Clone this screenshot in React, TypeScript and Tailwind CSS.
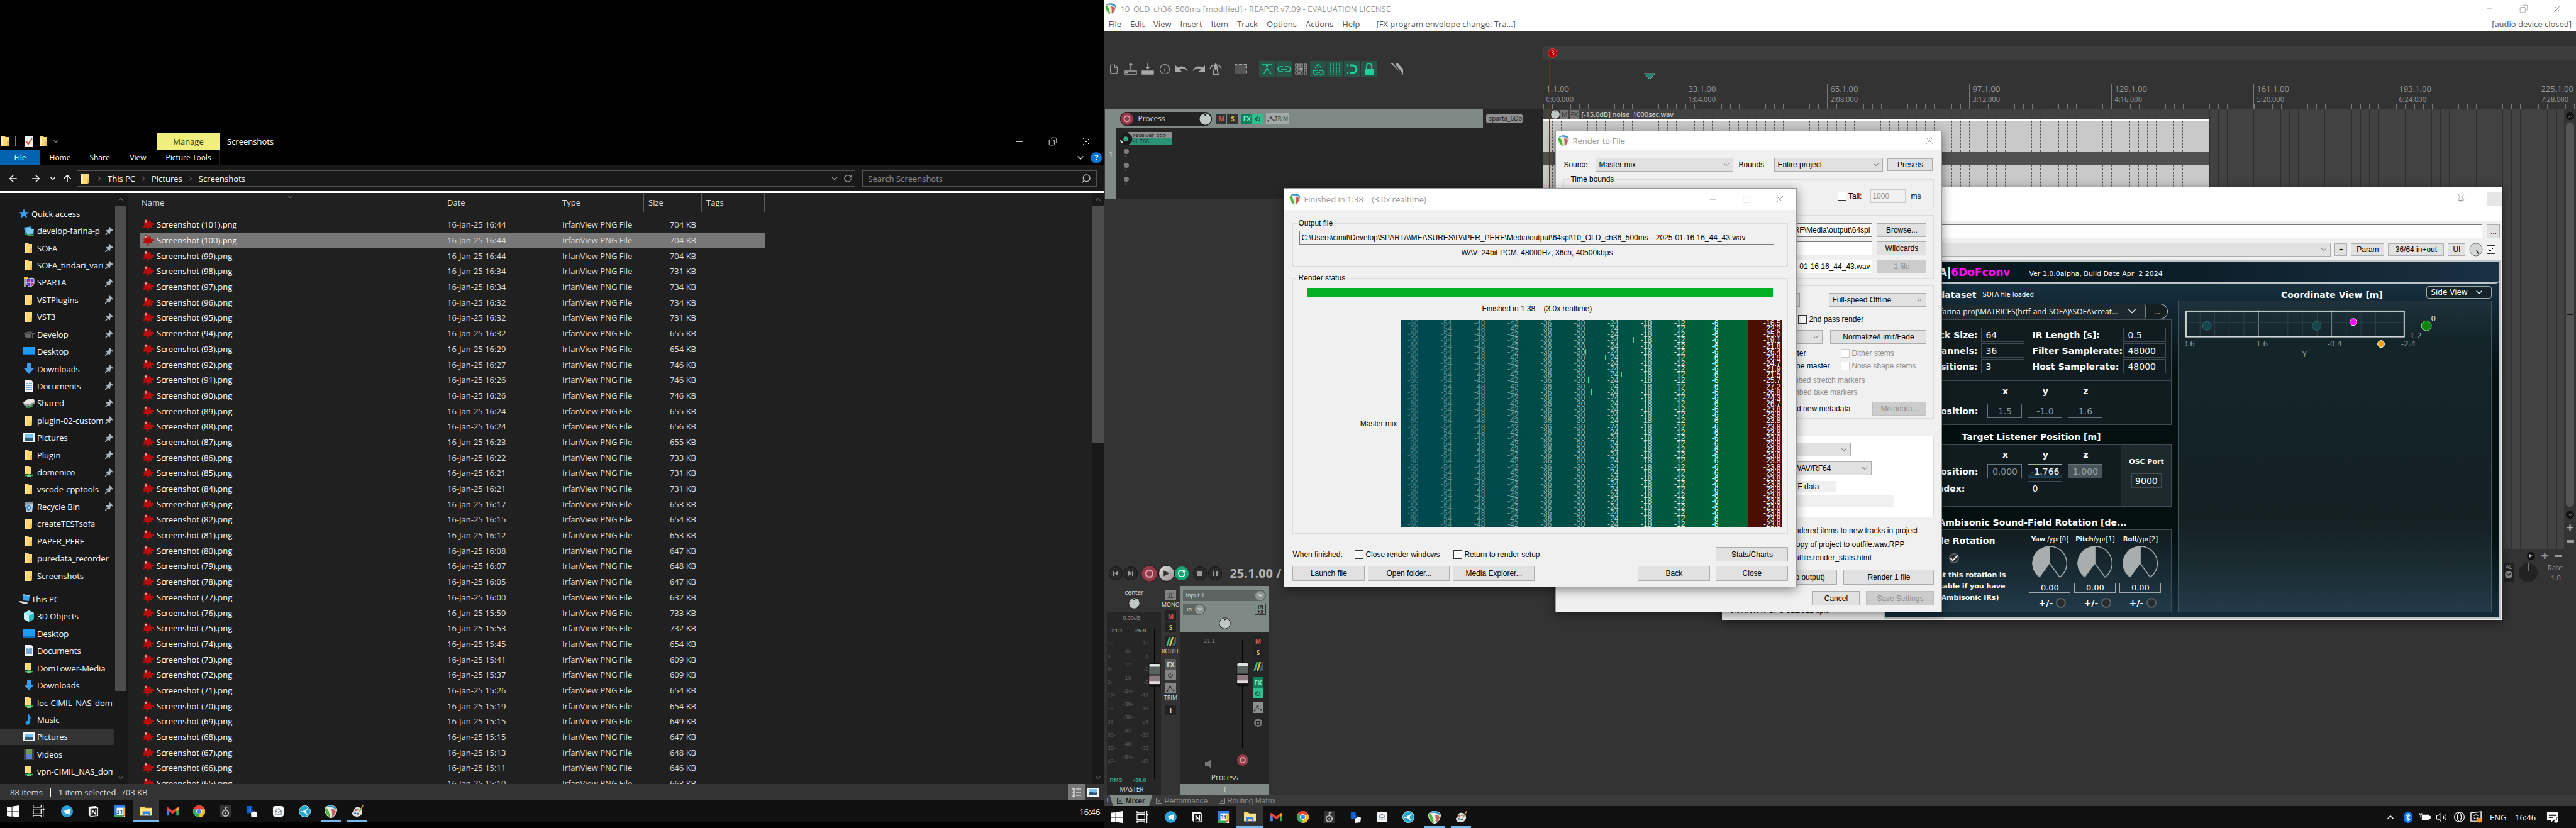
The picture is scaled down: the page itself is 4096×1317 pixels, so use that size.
import React from "react";
import {
  ArrowLeft, ArrowRight, ArrowUp, ChevronDown, ChevronRight, ChevronUp, Copy, Minus, RotateCw, Search, X, Square,
  Info, File, Bluetooth, Volume2, Globe, Check, Pin,
} from "lucide-react";

/* ---------- data ---------- */

const FILES: [number, string, number][] = [
  [101, "16:44", 704], [100, "16:44", 704], [99, "16:44", 704], [98, "16:34", 731], [97, "16:34", 734],
  [96, "16:32", 734], [95, "16:32", 731], [94, "16:32", 655], [93, "16:29", 654], [92, "16:27", 746],
  [91, "16:26", 746], [90, "16:26", 746], [89, "16:24", 655], [88, "16:24", 656], [87, "16:23", 655],
  [86, "16:22", 733], [85, "16:21", 731], [84, "16:21", 731], [83, "16:17", 653], [82, "16:15", 654],
  [81, "16:12", 653], [80, "16:08", 647], [79, "16:07", 648], [78, "16:05", 647], [77, "16:00", 632],
  [76, "15:59", 733], [75, "15:53", 732], [74, "15:45", 654], [73, "15:41", 609], [72, "15:37", 609],
  [71, "15:26", 654], [70, "15:19", 654], [69, "15:15", 649], [68, "15:15", 647], [67, "15:13", 648],
  [66, "15:11", 646], [65, "15:10", 663],
];

type NavItem = { name: string; icon: string; pin?: boolean; active?: boolean };

const QUICK: NavItem[] = [
  { name: "develop-farina-p", icon: "pcs", pin: true },
  { name: "SOFA", icon: "folder", pin: true },
  { name: "SOFA_tindari_vari", icon: "folder", pin: true },
  { name: "SPARTA", icon: "shield", pin: true },
  { name: "VSTPlugins", icon: "folder", pin: true },
  { name: "VST3", icon: "folder", pin: true },
  { name: "Develop", icon: "chip", pin: true },
  { name: "Desktop", icon: "desktop", pin: true },
  { name: "Downloads", icon: "down", pin: true },
  { name: "Documents", icon: "doc", pin: true },
  { name: "Shared", icon: "drive", pin: true },
  { name: "plugin-02-custom", icon: "folder", pin: true },
  { name: "Pictures", icon: "pic", pin: true },
  { name: "Plugin", icon: "folder", pin: true },
  { name: "domenico", icon: "net", pin: true },
  { name: "vscode-cpptools", icon: "folder", pin: true },
  { name: "Recycle Bin", icon: "bin", pin: true },
  { name: "createTESTsofa", icon: "folder" },
  { name: "PAPER_PERF", icon: "folder" },
  { name: "puredata_recorder", icon: "folder" },
  { name: "Screenshots", icon: "folder" },
];

const THIS_PC: NavItem[] = [
  { name: "3D Objects", icon: "cube" },
  { name: "Desktop", icon: "desktop" },
  { name: "Documents", icon: "doc" },
  { name: "DomTower-Media", icon: "net" },
  { name: "Downloads", icon: "down" },
  { name: "loc-CIMIL_NAS_dom", icon: "net" },
  { name: "Music", icon: "music" },
  { name: "Pictures", icon: "pic", active: true },
  { name: "Videos", icon: "video" },
  { name: "vpn-CIMIL_NAS_dom", icon: "net" },
];

const PEAKS = [
  "-16.5", "-22.2", "-25.0", "-19.1", "-21.8", "-26.4", "-23.9", "-24.7", "-21.9", "-21.5", "-25.7", "-27.2",
  "-26.8", "-24.3", "-26.7", "-23.8", "-23.8", "-23.8", "-23.8", "-23.8", "-23.8", "-23.8", "-23.8", "-23.8",
  "-23.8", "-23.8", "-23.8", "-23.8", "-23.8", "-23.8", "-23.8", "-23.8", "-23.8", "-23.8", "-23.8", "-23.8",
];
const LEVELS: [string, string][] = [
  ["-60", "w-[27px] text-white/30"], ["-54", "flex-1 text-white/35"], ["-48", "flex-1 text-white/45"], ["-42", "flex-1 text-white/50"],
  ["-36", "flex-1 text-white/55"], ["-30", "flex-1 text-white/60"], ["-24", "flex-1 text-white/70"], ["-18", "flex-1 text-white/80"],
  ["-12", "flex-1 text-white/90"], ["-6", "flex-1 text-white"],
];

/* ---------- small icons ---------- */

function NavIcon({ kind }: { kind: string }) {
  const p = { viewBox: "0 0 18 18", className: "h-[18px] w-[18px] shrink-0" };
  switch (kind) {
    case "folder":
      return <svg {...p}><path d="M2 1h6l1 1h5v14l-2 1H2z" fill="#ffd874" /><path d="M2 1l3 2v14l-3-2z" fill="#ffecb0" /><path d="M11 9h3v7h-3z" fill="#f2bd4b" /></svg>;
    case "net":
      return <svg {...p}><path d="M3 0h6l1 1h3v11H3z" fill="#ffd874" /><path d="M3 0l2 2v10H3z" fill="#ffecb0" /><path d="M2 14h14M9 12v3" stroke="#3dae5c" strokeWidth="2.5" /><path d="M6 14h6v3H6z" fill="#6fd08a" /></svg>;
    case "pcs":
      return <svg {...p}><path d="M1 4l12-2v9L3 13z" fill="#4aa8e8" /><path d="M5 5l12 1-1 8-10 1z" fill="#7ccbf5" /><path d="M3 14l9 3 5-2" stroke="#3dae5c" strokeWidth="2" fill="none" /></svg>;
    case "shield":
      return <svg {...p}><path d="M1 1h3v16H1z" fill="#9aa0a8" /><path d="M1 1h6v3H1z" fill="#e8c82e" /><path d="M5 3c4 1 8-2 12 0v6c0 4-3 6-6 8-3-2-6-4-6-8z" fill="#5a2fd0" stroke="#fff" /><path d="M11 3v14M5 9h12" stroke="#fff" /><path d="M7 5h3v3H7zM12 10h3v3h-3z" fill="#e03030" /></svg>;
    case "chip":
      return <svg {...p}><path d="M1 7l10-2 6 3-2 1v5M3 9v4M6 9v5M9 9v5M12 9v5" stroke="#777" strokeWidth="1.6" fill="none" /><path d="M1 7l10-2 6 3-9 1z" fill="#444" /></svg>;
    case "desktop":
      return <svg {...p}><path d="M0 2h18v13H0z" fill="#1e9bf5" /><path d="M0 13h18v2H0z" fill="#0b6fc4" /></svg>;
    case "down":
      return <svg {...p}><path d="M6 0h6v8h5l-8 9-8-9h5z" fill="#3d9be9" /></svg>;
    case "doc":
      return <svg {...p}><path d="M2 0h11l3 3v15H2z" fill="#f2f6fa" /><path d="M4 5h3M9 5h5M4 8h10M4 11h10M4 14h10" stroke="#4b8ec9" strokeWidth="1.3" /></svg>;
    case "drive":
      return <svg {...p}><path d="M0 8l7-5h10l1 4-7 4H1z" fill="#e4e4e4" /><path d="M1 11h10l7-4v3l-7 4H2z" fill="#9a9a9a" /><path d="M4 15c4 1 8 1 11-2" stroke="#3dae5c" strokeWidth="2.4" fill="none" /></svg>;
    case "pic":
      return <svg {...p}><path d="M0 2h18v14H0z" fill="#f4f8fb" /><path d="M2 4h14v10H2z" fill="#7cc4ef" /><path d="M2 10c5-3 8 1 14-1v5H2z" fill="#2c5872" /></svg>;
    case "bin":
      return <svg {...p}><path d="M2 2l14-1-2 16H5z" fill="#c9d0d6" /><path d="M2 2l14-1-1 4-12 1z" fill="#8b949b" /><path d="M6 9l3-2 3 3-2 4H7z" fill="none" stroke="#1f87d6" strokeWidth="1.6" /></svg>;
    case "cube":
      return <svg {...p}><path d="M9 0l8 4v10l-8 4-8-4V4z" fill="#35bccb" /><path d="M9 0l8 4-8 4-8-4z" fill="#9becf2" /><path d="M1 4l8 4v10l-8-4z" fill="#c8f6f8" /></svg>;
    case "music":
      return <svg {...p}><path d="M9 0c0 4 5 4 4 9 0-2-2-3-3-3v8a3.200 3 0 1 1-2-3V0z" fill="#1e9bf5" /></svg>;
    case "video":
      return <svg {...p}><path d="M1 0h16v18H1z" fill="#3a3f4a" /><path d="M4 1h10v7H4z" fill="#6f9a52" /><path d="M4 9h10v8H4z" fill="#5b7fd6" /><path d="M2.500 0v18M15.500 0v18" stroke="#a8b0c0" strokeDasharray="2 2" /></svg>;
    case "star":
      return <svg {...p} className="h-4 w-4 shrink-0"><path d="M9 0l2.500 6H18l-5 4 2 7-6-4-6 4 2-7-5-4h6.500z" fill="#3aa0f0" /></svg>;
    default:
      return <svg {...p}><path d="M6 1l11 2-1 9-9-1z" fill="#39a5ef" /><path d="M6 1l11 2v1L7 3z" fill="#bfe4fb" /><path d="M1 12l9 1 5 2-5 2-9-3z" fill="#d8dde0" /></svg>;
  }
}

const PinMark = () => (
  <svg viewBox="0 0 14 14" className="h-[13px] w-[13px] shrink-0"><path d="M8 0l6 6-1.500 1-1.500-.5-2 2V11l-1.500 1.500L1.500 6.500 3 5h2.500l2-2L7 1.500z" fill="#a9b4bc" /><path d="M4.500 9.500L0 14" stroke="#a9b4bc" strokeWidth="1.600" /></svg>
);

const Splat = () => (
  <svg viewBox="0 0 18 18" className="h-[18px] w-[18px] shrink-0">
    <path d="M4 1c3-1 4 1 4 3l2 1c0-2 1-3 2-2s1 3 1 4c2 0 4-1 5 1s-2 2-4 2c-1 1 1 3 0 4s-3-1-4 0-1 4-2 4-2-3-2-5c-2 0-4 2-5 1s1-3 2-4C2 9 1 9 1 8s2-1 2-2-1-4 1-5z" fill="#b80d0d" />
    <circle cx="5" cy="4" r="2.200" fill="#d86a6a" /><circle cx="4.500" cy="3.400" r="1" fill="#f3d0d0" />
  </svg>
);

const ReaperLogo = ({ small }: { small?: boolean }) => (
  <svg viewBox="0 0 20 20" className={small ? "h-[18px] w-[18px] shrink-0" : "h-5 w-5 shrink-0"}>
    <path d="M10 0C4 0 0 2.500 0 7c0 5 5 13 10 13s10-8 10-13c0-4.500-4-7-10-7z" fill="#e4efec" />
    <path d="M1 5C0 9 4 17 9 19.500 8 14 7 9 5 6 4 4 2 3.500 1 5z" fill="#4fb52b" />
    <path d="M2 4C5-1 16-1 19 5v4C17 4 13 3 10 3 7 2.500 4 3 2 4z" fill="#2c8fc2" />
    <path d="M11 6c3-1 6 1 7 4-1 4-3 7-6 9 0-5 0-9-1-13z" fill="#c8605a" />
  </svg>
);

/* ---------- taskbar ---------- */

function TaskIcon({ kind }: { kind: string }) {
  const p = { viewBox: "0 0 20 20", className: "h-[19px] w-[19px]" };
  switch (kind) {
    case "start": return <svg {...p}><path d="M0 3l8-1v8H0zM9 1.800L20 0v10H9zM0 11h8v8l-8-1zM9 11h11v9L9 18.500z" fill="#fff" /></svg>;
    case "tasks": return <svg {...p}><path d="M1 0v3h13V0M1 20v-3h13v3M1 6h13v8H1zM17.500 0v5M17.500 8v12" fill="none" stroke="#fff" strokeWidth="1.300" /><path d="M16.500 5h3v3h-3z" fill="#fff" /></svg>;
    case "telegram": return <svg {...p}><circle cx="10" cy="10" r="10" fill="#2aa1da" /><path d="M3.500 10L16 5l-2 11-4-3-2 2-.5-3.500z" fill="#fff" /></svg>;
    case "notion": return <svg {...p}><path d="M2 2l12-1 4 3v14l-13 1-3-3z" fill="#fff" /><path d="M5 5l12-.5V17L5 18z" fill="#111" /><path d="M8 15V8l6 7V7" stroke="#fff" strokeWidth="1.800" fill="none" /></svg>;
    case "calendar": return <svg {...p}><path d="M1 0h18v20H1z" fill="#fff" /><path d="M1 0h18v4H1zM1 0h4v16H1z" fill="#2f7df0" /><path d="M15 4h4v12h-4z" fill="#fbbc04" /><path d="M1 16h14v4H1z" fill="#34a853" /><path d="M15 16h4l-4 4z" fill="#ea4335" /><path d="M5 4h10v12H5z" fill="#fff" /><text x="10" y="13.500" fontSize="9" textAnchor="middle" fill="#1967d2" fontWeight="bold">31</text></svg>;
    case "explorer": return <svg {...p}><path d="M0 2h7l2 2h11v13H0z" fill="#fcd462" /><path d="M0 5h20v12H0z" fill="#ffe08a" /><path d="M4 10h12v8h-3v-4H7v4H4z" fill="#2f8be0" /></svg>;
    case "gmail": return <svg {...p}><path d="M0 4v13h4V8z" fill="#4285f4" /><path d="M20 4v13h-4V8z" fill="#34a853" /><path d="M0 4l2-1 8 6 8-6 2 1v3l-10 7L0 7z" fill="#ea4335" /><path d="M16 6l4-3v4l-4 3z" fill="#fbbc04" /></svg>;
    case "chrome": return <svg {...p}><circle cx="10" cy="10" r="10" fill="#fff" /><path d="M10 10L1.300 5A10 10 0 0 1 18.700 5z" fill="#ea4335" /><path d="M10 10L18.700 5A10 10 0 0 1 10 20z" fill="#fbbc04" /><path d="M10 10v10A10 10 0 0 1 1.300 5z" fill="#34a853" /><circle cx="10" cy="10" r="4.800" fill="#fff" /><circle cx="10" cy="10" r="3.700" fill="#4285f4" /></svg>;
    case "foobar": return <svg {...p}><path d="M1 0h18v20H1z" fill="#333" /><circle cx="10" cy="13" r="5" fill="none" stroke="#bbb" strokeWidth="2" /><circle cx="10" cy="13" r="1.500" fill="#bbb" /><path d="M10 8V3h4" stroke="#bbb" strokeWidth="1.600" fill="none" /></svg>;
    case "blue": return <svg {...p}><path d="M2 1h8v12H2z" fill="#1160d8" /><path d="M8 6l6 4 5 1-1 8-9 1z" fill="#fff" /><path d="M8 5l6 5-5 3z" fill="#0b3fa0" /></svg>;
    case "mail": return <svg {...p}><rect x="1" y="1" width="18" height="18" rx="4" fill="#f7f7f7" /><path d="M5 9l5-4 5 4v6H5zM5 9l5 3 5-3" fill="none" stroke="#7b8a9c" strokeWidth="1.200" /></svg>;
    case "share": return <svg {...p}><circle cx="10" cy="10" r="9.500" fill="#22a7cf" stroke="#bfeaf6" /><circle cx="10" cy="10" r="2.500" fill="#fff" /><path d="M10 10l5-5M10 10l-7 1M10 10l4 6" stroke="#fff" strokeWidth="1.800" /></svg>;
    case "reaper": return <ReaperLogo />;
    default: return <svg {...p}><path d="M10 3c6 0 8 4 8 8s-4 8-9 8c-4 0-8-2-8-6 0-2 3-2 3-4 0-4 3-6 6-6z" fill="#dfe3da" /><circle cx="7" cy="8" r="1.600" fill="#d33" /><circle cx="11" cy="7" r="1.500" fill="#2a7" /><circle cx="6" cy="13" r="1.600" fill="#36c" /><circle cx="11" cy="14" r="1.800" fill="#555" /><path d="M19 0l-6 11" stroke="#b98b50" strokeWidth="2" /></svg>;
  }
}

const APPS: [string, string][] = [
  ["telegram", "Telegram"], ["notion", "Notion"], ["calendar", "Calendar"], ["explorer", "File Explorer"], ["gmail", "Gmail"],
  ["chrome", "Chrome"], ["foobar", "Player"], ["blue", "Remote desktop"], ["mail", "Mail"], ["share", "Share"],
  ["reaper", "REAPER"], ["paint", "Paint"],
];

function TaskApps() {
  return (
    <div className="flex h-full">
      <button aria-label="Start" className="flex w-10 items-center justify-center"><TaskIcon kind="start" /></button>
      <button aria-label="Task view" className="mr-[3px] flex w-[42px] items-center justify-center"><TaskIcon kind="tasks" /></button>
      {APPS.map(([k, name]) => (
        <button
          key={k}
          aria-label={name}
          className={
            k === "explorer"
              ? "flex w-[42px] items-center justify-center border-b-[3px] border-[#76b9ed] bg-[#333] pt-[3px]"
              : k === "reaper" || k === "paint"
              ? "mx-[5px] flex w-8 items-center justify-center border-b-[3px] border-[#76b9ed] pt-[3px]"
              : "flex w-[42px] items-center justify-center"
          }
        >
          <TaskIcon kind={k} />
        </button>
      ))}
    </div>
  );
}

/* ---------- file explorer ---------- */

function NavRow({ item }: { item: NavItem }) {
  return (
    <li className="flex min-h-0 flex-1 items-center">
      <a href="#" className={`flex h-[25px] w-[181px] items-center pr-px pl-[37px] ${item.active ? "bg-[#333]" : ""}`}>
        <NavIcon kind={item.icon} />
        <span className="ml-1 flex-1 overflow-hidden whitespace-nowrap">{item.name}</span>
        {item.pin && <PinMark />}
      </a>
    </li>
  );
}

function Explorer() {
  return (
    <section className="flex h-full min-w-0 flex-col overflow-hidden bg-black text-[13px] leading-5 text-white">
      <div className="h-[211px] shrink-0" />
      <header className="flex h-[27px] shrink-0 items-center">
        <div className="flex w-[249px] items-center">
          <NavIcon kind="folder" />
          <span className="mx-1.5 h-4 w-px bg-[#777]" />
          <svg viewBox="0 0 18 18" className="ml-1.5 h-[18px] w-[18px]"><path d="M2 0h14v18H2z" fill="#eee" /><path d="M4 8l4 5 6-9" fill="none" stroke="#d0502a" strokeWidth="2" /></svg>
          <span className="ml-1.5"><NavIcon kind="folder" /></span>
          <ChevronDown className="ml-1 h-3 w-3" />
          <span className="ml-2 h-4 w-px bg-[#777]" />
        </div>
        <div className="flex h-full w-[101px] items-center justify-center bg-[#f0ee7c] text-[#3b3a10]">Manage</div>
        <h1 className="ml-[11px] flex-1">Screenshots</h1>
        <button aria-label="Minimize" className="flex w-[53px] justify-center"><Minus className="h-4 w-4" /></button>
        <button aria-label="Restore" className="flex w-[53px] justify-center"><Copy className="h-3.5 w-3.5 -scale-x-100" strokeWidth={1.500} /></button>
        <button aria-label="Close" className="mr-0.5 flex w-[53px] justify-center"><X className="h-[18px] w-[18px]" strokeWidth={1.300} /></button>
      </header>
      <nav className="flex h-[25px] shrink-0 items-center text-[12px]">
        <button className="h-full w-16 bg-[#0063b1]">File</button>
        <button className="w-[63px]">Home</button>
        <button className="w-[63px]">Share</button>
        <button className="w-[59px]">View</button>
        <button className="h-full w-[101px] border-x border-[#222]">Picture Tools</button>
        <span className="flex-1" />
        <ChevronDown className="h-4 w-4" />
        <span className="mr-[3px] ml-2 flex h-[18px] w-[18px] items-center justify-center rounded-full bg-[#0078d7] text-[12px] font-bold">?</span>
      </nav>
      <div className="flex h-[41px] shrink-0 items-center bg-[#191919]">
        <button aria-label="Back" className="ml-3 w-[18px]"><ArrowLeft className="h-[18px] w-[18px]" /></button>
        <button aria-label="Forward" className="ml-[18px] w-[18px]"><ArrowRight className="h-[18px] w-[18px]" /></button>
        <button aria-label="Recent" className="ml-3"><ChevronDown className="h-3 w-3" strokeWidth={3} /></button>
        <button aria-label="Up" className="ml-2"><ArrowUp className="h-[18px] w-[18px]" /></button>
        <div className="ml-1.5 flex h-[26px] flex-1 items-center gap-[7px] border border-[#535353] pr-1 pl-1">
          <NavIcon kind="folder" />
          <ChevronRight className="h-3 w-3 text-[#999]" />
          <a href="#">This PC</a>
          <ChevronRight className="h-3 w-3 text-[#999]" />
          <a href="#">Pictures</a>
          <ChevronRight className="h-3 w-3 text-[#999]" />
          <a href="#" className="flex-1">Screenshots</a>
          <ChevronDown className="h-3.5 w-3.5 text-[#aaa]" />
          <RotateCw className="h-3.5 w-3.5 text-[#aaa]" />
        </div>
        <div className="mr-[11px] ml-[11px] flex h-[26px] w-[373px] items-center border border-[#535353] px-2">
          <input aria-label="Search" placeholder="Search Screenshots" className="min-w-0 flex-1 bg-transparent placeholder:text-[#8a8a8a]" />
          <Search className="h-4 w-4 -scale-x-100 text-[#ccc]" />
        </div>
      </div>
      <div className="h-[3px] shrink-0 bg-white" />
      <div className="flex min-h-0 flex-1">
        <aside className="flex w-[204px] shrink-0 border-r border-[#333] bg-[#191919]">
          <ul className="flex w-[183px] flex-col pt-[19px] pb-1.5">
            <li className="flex flex-1 items-center gap-1 pl-[30px]"><NavIcon kind="star" />Quick access</li>
            {QUICK.map((i) => <NavRow key={i.name} item={i} />)}
            <li className="h-2.5" />
            <li className="flex flex-1 items-center gap-0.5 pl-[30px]"><NavIcon kind="pc" />This PC</li>
            {THIS_PC.map((i) => <NavRow key={i.name} item={i} />)}
          </ul>
          <div className="flex w-[17px] flex-col items-center">
            <ChevronUp className="my-1 h-3 w-3 text-[#999]" />
            <div className="h-[772px] w-full bg-[#4d4d4d]" />
            <span className="flex-1" />
            <ChevronDown className="my-1 h-3 w-3 text-[#999]" />
          </div>
        </aside>
        <div className="relative min-w-0 flex-1 overflow-hidden bg-[#202020]">
          <ChevronDown className="absolute top-0 left-[251px] h-3 w-3 text-[#999]" />
          <table className="ml-[19px] h-[952px] w-[993px] table-fixed border-collapse text-left">
            <thead>
              <tr className="text-[#dedede]">
                {[["Name", "w-[482px] pl-0.5"], ["Date", "w-[183px] pl-1.5"], ["Type", "w-[136px] pl-1.5"], ["Size", "w-[92px] pl-[7px]"], ["Tags", "w-[100px] pl-[7px]"]].map(([h, c]) => (
                  <th key={h} scope="col" className={`h-[38px] align-top font-normal ${c}`}>
                    <div className="flex h-[30px] items-center border-r border-[#5a5a5a]">{h}</div>
                  </th>
                ))}
              </tr>
            </thead>
            <tbody>
              {FILES.map(([n, t, s]) => (
                <tr key={n} className={n === 100 ? "bg-[#777]" : ""}>
                  <td className="p-0 pl-1"><div className="flex items-center gap-1"><Splat />Screenshot ({n}).png</div></td>
                  <td className="p-0 pl-1.5 text-[#dedede]">16-Jan-25 {t}</td>
                  <td className="p-0 pl-1.5 text-[#dedede]">IrfanView PNG File</td>
                  <td className="p-0 pr-[9px] text-right text-[#dedede]">{s} KB</td>
                  <td className="p-0" />
                </tr>
              ))}
            </tbody>
          </table>
        </div>
        <div className="flex w-[18px] shrink-0 flex-col items-center bg-[#191919]">
          <ChevronUp className="my-1 h-3 w-3 text-[#999]" />
          <div className="h-[378px] w-full bg-[#4d4d4d]" />
          <span className="flex-1" />
          <ChevronDown className="my-1 h-3 w-3 text-[#999]" />
        </div>
      </div>
      <footer className="flex h-[26px] shrink-0 items-center bg-[#333] pl-4 text-[#dedede]">
        <span>88 items</span>
        <span className="mx-3 h-3.5 w-px bg-white" />
        <span>1 item selected</span>
        <span className="ml-2">703 KB</span>
        <span className="ml-3 h-3.5 w-px bg-white" />
        <span className="flex-1" />
        <button aria-label="Details" className="flex h-full w-[27px] items-center justify-center bg-[#777]">
          <svg viewBox="0 0 16 16" className="h-4 w-4"><path d="M2 2h3v3H2zM2 7h3v3H2zM2 12h3v3H2zM7 3h8M7 8h8M7 13h8" stroke="#fff" fill="none" /></svg>
        </button>
        <button aria-label="Thumbnails" className="mr-2 ml-1"><NavIcon kind="pic" /></button>
      </footer>
      <div className="flex h-[35px] shrink-0 items-center bg-[#101010]">
        <TaskApps />
        <span className="flex-1" />
        <span className="mr-1.5">16:46</span>
      </div>
      <div className="h-[9px] shrink-0" />
    </section>
  );
}

/* ---------- native dialog controls ---------- */

const Btn = ({ children, className = "", disabled }: { children: React.ReactNode; className?: string; disabled?: boolean }) => (
  <button
    disabled={disabled}
    className={`flex shrink-0 items-center justify-center border whitespace-nowrap ${disabled ? "border-[#bfbfbf] bg-[#cccccc] text-[#8f8f8f]" : "border-[#adadad] bg-[#e1e1e1]"} ${className}`}
  >
    {children}
  </button>
);

const Drop = ({ label, value, className = "", pad = "pr-5 pl-1" }: { label: string; value: string; className?: string; pad?: string }) => (
  <div className={`relative h-[22px] shrink-0 ${className}`}>
    <select aria-label={label} className={`h-full w-full appearance-none border border-[#adadad] bg-[#e1e1e1] ${pad}`} defaultValue={value}>
      <option>{value}</option>
    </select>
    <ChevronDown className="pointer-events-none absolute top-1 right-1 h-3.5 w-3.5 text-[#555]" strokeWidth={1.500} />
  </div>
);

const Tick = ({ label, disabled, className = "" }: { label: string; disabled?: boolean; className?: string }) => (
  <label className={`flex h-4 items-center gap-[3px] whitespace-nowrap ${disabled ? "text-[#8a8a8a]" : ""} ${className}`}>
    <input type="checkbox" disabled={disabled} className={`h-3.5 w-3.5 appearance-none border bg-white ${disabled ? "border-[#ccc]" : "border-[#333]"}`} />
    {label}
  </label>
);

/* ---------- finished dialog ---------- */

const MARKS: [string, string][] = [
  ["left-[388px]", "top-0"], ["left-[369px]", "top-[27px]"], ["left-[324px]", "top-[55px]"], ["left-[350px]", "top-[82px]"],
  ["left-[297px]", "top-[91px]"], ["left-[302px]", "top-[110px]"], ["left-[319px]", "top-[119px]"], ["left-[346px]", "top-[37px]"],
  ["left-[293px]", "top-[46px]"],
];

function FinishedDialog() {
  return (
    <section className="absolute top-[299px] left-[286px] w-[816px] border border-[#9a9a9a] bg-[#f0f0f0] font-['Liberation_Sans',Arial,sans-serif] text-[12px] leading-4 text-black shadow-[0_4px_16px_rgba(0,0,0,0.450)]">
      <header className="flex h-[34px] items-center bg-white pl-2 font-['Open_Sans',sans-serif] text-[13px] text-[#999]">
        <ReaperLogo small />
        <h2 className="ml-[5px] flex-1 whitespace-pre">{"Finished in 1:38    (3.0x realtime)"}</h2>
        <button aria-label="Minimize" className="flex w-[53px] justify-center"><Minus className="h-4 w-4" strokeWidth={1.500} /></button>
        <button aria-label="Maximize" className="flex w-[53px] justify-center text-[#e0e0e0]"><Square className="h-3.5 w-3.5" strokeWidth={1.500} /></button>
        <button aria-label="Close" className="flex w-[53px] justify-center"><X className="h-[18px] w-[18px]" strokeWidth={1.300} /></button>
      </header>
      <div className="px-[13px] pt-[13px] pb-[9px]">
        <fieldset className="min-w-0 border border-[#dcdcdc] pr-[21px] pb-[13px] pl-2.5">
          <legend className="-ml-1 px-0.5">Output file</legend>
          <input
            aria-label="Output file"
            readOnly
            className="mt-1 block h-[22px] w-full border border-[#7a7a7a] bg-[#f0f0f0] px-0.5"
            defaultValue={"C:\\Users\\cimil\\Develop\\SPARTA\\MEASURES\\PAPER_PERF\\Media\\output\\64spl\\10_OLD_ch36_500ms---2025-01-16 16_44_43.wav"}
          />
          <p className="mt-[5px] text-center">WAV: 24bit PCM, 48000Hz, 36ch, 40500kbps</p>
        </fieldset>
        <fieldset className="mt-2.5 min-w-0 border border-[#dcdcdc] pr-2 pb-2.5 pl-2.5">
          <legend className="-ml-1 px-0.5">Render status</legend>
          <div className="mt-2 mr-[15px] ml-[13px] h-3.5 bg-[#06b025]" role="progressbar" aria-label="Render progress" aria-valuenow={100} />
          <p className="mt-[11px] mr-[13px] text-center whitespace-pre">{"Finished in 1:38    (3.0x realtime)"}</p>
          <div className="mt-2.5 flex items-center justify-end gap-[7px]">
            <span>Master mix</span>
            <div className="relative flex h-[329px] w-[606px] bg-linear-to-r from-[#00484f] via-[#004d46] to-[#006634] to-90% text-[12px] leading-[9px]">
              <div className="flex flex-1 pr-12">
                {LEVELS.map(([v, c]) => (
                  <div key={v} className={`flex flex-col text-right ${c}`}>
                    {PEAKS.map((_, i) => <span key={i} className="min-h-0 flex-1 pt-px">{v}</span>)}
                  </div>
                ))}
              </div>
              <div className="flex w-[54px] flex-col bg-[#4a0f00] pr-[3px] text-right text-white">
                {PEAKS.map((v, i) => <span key={i} className="min-h-0 flex-1 pt-px">{v}</span>)}
              </div>
              {MARKS.map(([l, t]) => <i key={l} className={`absolute h-[9px] w-px bg-[#2fe0a0] ${l} ${t}`} />)}
            </div>
          </div>
        </fieldset>
        <div className="mt-[21px] flex items-center">
          <span className="w-[99px]">When finished:</span>
          <Tick label="Close render windows" className="w-[157px]" />
          <Tick label="Return to render setup" />
          <span className="flex-1" />
          <Btn className="h-[23px] w-[115px]">Stats/Charts</Btn>
        </div>
        <div className="mt-[7px] flex items-center gap-[5px]">
          <Btn className="h-6 w-[115px]">Launch file</Btn>
          <Btn className="h-6 w-[130px]">Open folder...</Btn>
          <Btn className="h-6 w-[130px]">Media Explorer...</Btn>
          <span className="flex-1" />
          <Btn className="mr-1 h-6 w-[115px]">Back</Btn>
          <Btn className="h-6 w-[115px]">Close</Btn>
        </div>
      </div>
    </section>
  );
}

/* ---------- render to file ---------- */

function RenderDialog() {
  return (
    <section className="absolute top-[208px] left-[718px] w-[615px] border border-[#9a9a9a] bg-[#f0f0f0] font-['Liberation_Sans',Arial,sans-serif] text-[12px] leading-4 text-black shadow-[0_4px_16px_rgba(0,0,0,0.450)]">
      <header className="flex h-[29px] items-center bg-white pr-2.5 pl-[3px] font-['Open_Sans',sans-serif] text-[13px] text-[#999]">
        <ReaperLogo small />
        <h2 className="ml-[5px] flex-1">Render to File</h2>
        <button aria-label="Close"><X className="h-[18px] w-[18px]" strokeWidth={1.300} /></button>
      </header>
      <div className="px-3 pt-[13px] pb-2.5">
        <div className="flex items-center">
          <span className="w-[51px]">Source:</span>
          <Drop label="Source" value="Master mix" className="w-[219px]" />
          <span className="ml-2 w-[57px]">Bounds:</span>
          <Drop label="Bounds" value="Entire project" className="w-[173px]" />
          <Btn className="ml-[7px] h-5 w-[72px]">Presets</Btn>
        </div>
        <fieldset className="mt-1 min-w-0 border border-[#dcdcdc] pr-5 pb-1.5 pl-2">
          <legend className="px-0.5">Time bounds</legend>
          <div className="mt-2 flex items-center justify-end">
            <Tick label="Tail:" />
            <input aria-label="Tail length" defaultValue="1000" disabled className="ml-3.5 h-[22px] w-14 border border-[#ccc] px-0.5 text-[#8a8a8a]" />
            <span className="ml-2">ms</span>
          </div>
        </fieldset>
        <div className="mt-3 flex flex-col gap-[7px] border border-[#dcdcdc] py-3 pr-[11px] pb-[7px] pl-3">
          {[["Directory", "C:\\Users\\cimil\\Develop\\SPARTA\\MEASURES\\PAPER_PERF\\Media\\output\\64spl", "Browse..."], ["File name", "", "Wildcards"], ["Render to", "10_OLD_ch36_500ms---2025-01-16 16_44_43.wav", "1 file"]].map(([l, v, b]) => (
            <div key={l} className="flex gap-[7px]">
              <input aria-label={l} defaultValue={v} className="h-[22px] min-w-0 flex-1 border border-[#7a7a7a] bg-white px-[3px] text-right" />
              <Btn className="h-[22px] w-[79px]" disabled={b === "1 file"}>{b}</Btn>
            </div>
          ))}
        </div>
        <div className="mt-[11px] border border-[#dcdcdc] pt-[11px] pr-[11px] pb-1">
          <div className="flex justify-end">
            <Drop label="Channels" value="36" className="w-[90px]" />
            <Drop label="Speed" value="Full-speed Offline" className="ml-[46px] w-[155px]" />
          </div>
          <div className="mt-3 flex pl-[372px]"><Tick label="2nd pass render" /></div>
          <div className="mt-[9px] flex justify-end">
            <Drop label="Resample mode" value="r8brain free" className="w-[200px]" />
            <Btn className="ml-3 h-[22px] w-[153px]">Normalize/Limit/Fade</Btn>
          </div>
          <div className="mt-[7px] grid grid-cols-[440px_1fr]"><span className="pr-14 text-right">Dither master</span><Tick label="Dither stems" disabled /></div>
          <div className="mt-1 grid grid-cols-[440px_1fr]"><span className="pr-[18px] text-right">Noise shape master</span><Tick label="Noise shape stems" disabled /></div>
          <p className="mt-[7px] w-[478px] text-right text-[#8a8a8a]">Embed stretch markers</p>
          <p className="mt-[3px] w-[466px] text-right text-[#8a8a8a]">Embed take markers</p>
          <div className="mt-[7px] flex items-center justify-end">
            <span className="mr-[35px]">Add new metadata</span>
            <Btn disabled className="h-[22px] w-[86px]">Metadata...</Btn>
          </div>
        </div>
        <div className="mt-[27px] h-[130px] border border-[#dcdcdc] bg-white pt-2.5">
          <Drop label="Format" value="WAV" className="w-[456px]" />
          <Drop label="Large files" value="Auto WAV/RF64" className="mt-2 w-[489px]" pad="pr-[64px] pl-1 text-right" />
          <p className="mt-[9px] h-[18px] w-[432px] bg-[#f0f0f0] pr-[27px] text-right leading-[18px]">Include project filename in BWF data</p>
          <p className="mt-[5px] h-[18px] w-[524px] bg-[#f0f0f0] pr-[154px] text-right leading-[18px]">Embed tempo</p>
        </div>
        <p className="mt-[13px] w-[563px] text-right">Add rendered items to new tracks in project</p>
        <p className="mt-1.5 w-[542px] text-right">Save copy of project to outfile.wav.RPP</p>
        <p className="mt-[5px] w-[489px] text-right">Save stats to outfile.render_stats.html</p>
        <div className="mt-[11px] flex justify-end gap-2.5">
          <Btn className="h-6 w-[140px]">Dry run (no output)</Btn>
          <Btn className="h-6 w-[144px]">Render 1 file</Btn>
        </div>
        <div className="mt-2.5 flex justify-end gap-2.5">
          <Btn className="h-[23px] w-[76px]">Cancel</Btn>
          <Btn disabled className="h-[23px] w-[108px]">Save Settings</Btn>
        </div>
      </div>
    </section>
  );
}

/* ---------- plugin window ---------- */

const Field = ({ label, value, look = "border-[#3f4d52] bg-transparent px-1.5", className = "" }: { label: string; value: string; look?: string; className?: string }) => (
  <input aria-label={label} defaultValue={value} className={`h-[23px] shrink-0 border ${look} ${className}`} />
);

function XYZHead() {
  return (
    <div className="flex h-4 gap-2 pl-[153px] text-center font-bold">
      <span className="w-14">x</span><span className="w-14">y</span><span className="w-14">z</span>
    </div>
  );
}

function RotKnob({ name, path }: { name: string; path: string }) {
  return (
    <div className="flex w-[66px] flex-col items-center">
      <div className="flex h-4 items-center text-[10px] whitespace-nowrap"><b>{name}</b><span>{path}</span></div>
      <svg viewBox="0 0 56 54" className="mt-0.5 h-[54px] w-14">
        <path d="M28 28L12 50A27 27 0 0 1 28 1z" fill="#a8adad" stroke="#a8adad" />
        <path d="M28 1A27 27 0 0 1 44 50L28 28z" fill="none" stroke="#a8adad" strokeWidth="1.500" />
      </svg>
      <input aria-label={name} defaultValue="0.00" className="mt-[5px] h-4 w-full border border-[#a0a8aa] bg-transparent text-center text-[13px]" />
      <label className="mt-2 flex h-4 items-center gap-[5px] pl-2 font-bold">+/-<input type="checkbox" className="h-4 w-4 appearance-none rounded-full border-2 border-[#5c6264] bg-[#262c2e]" /></label>
    </div>
  );
}

function CoordinateView() {
  return (
    <svg viewBox="0 0 500 494" className="h-full w-full" fontSize="12" fill="#8d979b">
      {[...Array(14)].map((_, i) => <path key={i} d={`M${34.500 + i * 23.400} 13v42`} stroke={i === 4 || i === 9 ? "#7d8a8e" : "#2f4046"} />)}
      <path d="M11 32.500h350" stroke="#2f4046" />
      <rect x="12" y="14.500" width="349" height="41" fill="none" stroke="#cfd4d6" strokeWidth="2" />
      <circle cx="45.500" cy="38" r="7" fill="#14464a" stroke="#2f6a6c" />
      <circle cx="221" cy="38" r="7" fill="#14464a" stroke="#2f6a6c" />
      <circle cx="279.500" cy="32" r="5.500" fill="#ff00ff" stroke="#fff" />
      <circle cx="324" cy="67" r="5.500" fill="#ffa010" stroke="#fff" />
      <circle cx="396.500" cy="38" r="8" fill="#0a850a" stroke="#9fd89f" />
      <text x="404" y="31" fill="#e8e8e8">0</text>
      <text x="7" y="71">3.6</text><text x="124" y="71">1.6</text><text x="238" y="71">-0.4</text><text x="356" y="71">-2.4</text>
      <text x="370" y="58">1.2</text><text x="198" y="88">Y</text>
    </svg>
  );
}

const DIM = "border-[#66757a] bg-transparent text-center text-[#8a9699]";

function PluginWindow() {
  return (
    <section className="absolute top-[297px] left-[983px] flex h-[689px] w-[1241px] flex-col bg-[#f0f0f0] font-['Liberation_Sans',Arial,sans-serif] text-[12px] leading-4 text-black shadow-[0_4px_16px_rgba(0,0,0,0.450)]">
      <header className="flex h-[55px] shrink-0 justify-end bg-white pt-2">
        <Pin className="mt-0.5 mr-[34px] h-4 w-4 text-[#888]" strokeWidth={1.300} />
        <button aria-label="Close" className="h-[22px] w-6 bg-[#e6e6e6]" />
      </header>
      <div className="flex min-h-0 flex-1">
        <div className="flex w-[258px] flex-col justify-end pb-[7px] pl-3">0.0%/0.0% CPU 512/512 spls</div>
        <div className="flex min-w-0 flex-1 flex-col pt-[5px] pr-[3px] pb-0.5">
          <div className="flex gap-[7px] pr-px pl-2">
            <input aria-label="Comment" className="h-[22px] flex-1 border border-[#7a7a7a] bg-white" />
            <Btn className="h-[22px] w-[21px]">...</Btn>
          </div>
          <div className="mt-[7px] flex items-center gap-1.5 pr-2 pl-2">
            <Drop label="Preset" value="" className="flex-1" />
            <Btn className="h-5 w-5">+</Btn>
            <Btn className="h-5 w-[53px]">Param</Btn>
            <Btn className="h-5 w-[89px]">36/64 in+out</Btn>
            <Btn className="h-5 w-7">UI</Btn>
            <svg viewBox="0 0 22 22" className="h-[22px] w-[22px]"><circle cx="11" cy="11" r="10" fill="#d3d8d6" stroke="#6f7573" /><path d="M12 12l3 6" stroke="#222" strokeWidth="1.500" /></svg>
            <label className="flex h-3.5 w-3.5 items-center justify-center border border-[#333] bg-white"><input type="checkbox" aria-label="Enabled" defaultChecked className="hidden" /><Check className="h-3 w-3" /></label>
          </div>
          <div className="mt-1.5 flex min-h-0 flex-1 flex-col border-2 border-[#bfc4c6] bg-[linear-gradient(180deg,#16303f_0,#16303f_34px,#142a38_60px,#040f10_180px,#02100f_440px,#142c3a_560px)] font-['DejaVu_Sans',sans-serif] text-[14px] text-white">
            <div className="flex h-[35px] shrink-0 items-center rounded-b-md border-b-2 border-[#bfc4c6] bg-linear-to-r from-[#05141a] via-[#0c1e28] to-[#1a3144] pl-2">
              <h2 className="w-[190px] text-right text-[17px] font-bold whitespace-nowrap">SPARTA|<span className="text-[#ff10f0]">6DoFconv</span></h2>
              <span className="mt-1.5 ml-[30px] text-[11px] whitespace-pre">{"Ver 1.0.0alpha, Build Date Apr  2 2024"}</span>
            </div>
            <div className="flex min-h-0 flex-1">
              <div className="flex w-[455px] shrink-0 flex-col pl-2">
                <div className="flex h-8 items-center pt-1">
                  <b className="w-[136px] text-right">HRIR dataset</b>
                  <span className="ml-2.5 text-[10px] whitespace-nowrap">SOFA file loaded</span>
                </div>
                <div className="flex h-[25px] font-['Open_Sans',sans-serif] text-[12px]">
                  <div className="relative w-[406px]">
                    <select aria-label="Dataset" className="h-full w-full appearance-none rounded border border-[#77858a] bg-[#1c292e] pr-11 text-right">
                      <option>C:\farina-proj\MATRICES(hrtf-and-SOFA)\SOFA\creat...</option>
                    </select>
                    <ChevronDown className="pointer-events-none absolute top-0.5 right-3 h-5 w-5" />
                  </div>
                  <button aria-label="Browse" className="w-[35px] rounded-r-xl border border-[#c0c8ca] bg-[#141f22]">...</button>
                </div>
                <div className="flex flex-col gap-[2px] border border-[#3f4d52] bg-[#101c1f] pt-3 pb-[11px]">
                  {[["Block Size:", "64", "IR Length [s]:", "0.5"], ["Num Channels:", "36", "Filter Samplerate:", "48000"], ["Num Positions:", "3", "Host Samplerate:", "48000"]].map(([a, b, c, d]) => (
                    <div key={a} className="flex items-center whitespace-nowrap">
                      <b className="w-[137px] text-right">{a}</b>
                      <Field label={a} value={b} className="ml-1.5 w-[69px]" />
                      <b className="ml-3 w-[145px]">{c}</b>
                      <Field label={c} value={d} className="w-[68px]" />
                    </div>
                  ))}
                </div>
                <div className="flex h-[70px] flex-col gap-3 border border-t-0 border-[#3f4d52] bg-[#101c1f] pt-2">
                  <XYZHead />
                  <div className="flex items-center gap-[9px]">
                    <b className="mr-1.5 w-[138px] text-right">Position:</b>
                    {["1.5", "-1.0", "1.6"].map((v) => <Field key={v} label="Source" value={v} look={DIM} className="w-[55px]" />)}
                  </div>
                </div>
                <h3 className="flex h-[31px] items-center justify-center pt-1.5 font-bold">Target Listener Position [m]</h3>
                <div className="flex h-[99px] border border-[#3f4d52]">
                  <div className="flex w-[365px] flex-col bg-[#101c1f] pt-[7px]">
                    <XYZHead />
                    <div className="mt-[7px] flex items-center gap-[9px]">
                      <b className="mr-1.5 w-[138px] text-right">Position:</b>
                      <Field label="Target x" value="0.000" look={DIM} className="w-[55px]" />
                      <Field label="Target y" value="-1.766" look="border-[#9fb0b5] bg-linear-to-t from-[#1d4458] to-[#101c1f] to-40% text-center" className="w-[55px]" />
                      <Field label="Target z" value="1.000" look="border-[#66757a] bg-[#47545a] text-center text-[#9aa5a8]" className="w-[55px]" />
                    </div>
                    <div className="mt-1 flex items-center">
                      <b className="w-[117px] text-right">Index:</b>
                      <Field label="Index" value="0" className="ml-[100px] w-[55px]" />
                    </div>
                  </div>
                  <div className="flex flex-1 flex-col items-center border-l border-[#3f4d52] bg-[#1d2a2d] pt-[19px] text-[11px]">
                    <b>OSC Port</b>
                    <Field label="OSC Port" value="9000" look="border-[#3f4d52] bg-transparent text-center" className="mt-2.5 w-12 text-[14px]" />
                  </div>
                </div>
                <h3 className="flex h-9 items-center pt-3.5 pl-[76px] font-bold whitespace-nowrap">Ambisonic Sound-Field Rotation [de...</h3>
                <div className="flex h-[132px] border border-[#3f4d52] bg-linear-to-b from-[#101c1f] to-[#213a4a]">
                  <div className="w-[199px] border-r border-[#4f6068] pt-[9px] text-right text-[11px] font-bold">
                    <div className="pr-[33px] text-[14px]">Enable Rotation</div>
                    <div className="mt-3 flex justify-end pr-[90px]">
                      <label className="flex h-4 w-4 items-center justify-center rounded-full border-2 border-[#5c6264] bg-[#262c2e]"><input type="checkbox" aria-label="Enable Rotation" defaultChecked className="hidden" /><Check className="h-4 w-4 shrink-0" strokeWidth={3} /></label>
                    </div>
                    <p className="mt-2.5 pr-4 leading-[18px] whitespace-nowrap">Note that this rotation is</p>
                    <p className="pr-[17px] leading-[18px]">only usable if you have</p>
                    <p className="pr-[27px] leading-[18px]">Ambisonic IRs)</p>
                  </div>
                  <div className="flex gap-1.5 pt-[7px] pl-5">
                    <RotKnob name="Yaw" path="&nbsp;/ypr[0]" />
                    <RotKnob name="Pitch" path="/ypr[1]" />
                    <RotKnob name="Roll" path="/ypr[2]" />
                  </div>
                </div>
              </div>
              <div className="flex min-w-0 flex-1 flex-col pr-3 pb-2 pl-2.5">
                <div className="relative flex h-[27px] items-center justify-center pt-2">
                  <h3 className="mr-2.5 font-bold">Coordinate View [m]</h3>
                  <div className="absolute top-1 right-0 h-5 w-[104px] text-[12px]">
                    <select aria-label="View" className="h-full w-full appearance-none rounded border border-[#a0a8aa] bg-[#142229] px-1.5"><option>Side View</option></select>
                    <ChevronDown className="pointer-events-none absolute top-0.5 right-3 h-4 w-4" />
                  </div>
                </div>
                <div className="min-h-0 flex-1 border border-[#45555c] bg-[linear-gradient(180deg,#1f323b_0,#14252a_12%,#132024_70%,#1b2c31_85%,#233a4a_100%)]">
                  <CoordinateView />
                </div>
              </div>
            </div>
          </div>
        </div>
      </div>
    </section>
  );
}

/* ---------- REAPER main window ---------- */

const BARS = [["1.1.00", "0:00.000"], ["33.1.00", "1:04.000"], ["65.1.00", "2:08.000"], ["97.1.00", "3:12.000"], ["129.1.00", "4:16.000"], ["161.1.00", "5:20.000"], ["193.1.00", "6:24.000"], ["225.1.00", "7:28.000"]];

const GridLines = ({ line }: { line: string }) => (
  <div className="flex h-full">
    {BARS.map(([b]) => (
      <div key={b} className="grid h-full w-[226px] shrink-0 grid-cols-16">
        {[...Array(16)].map((_, i) => <i key={i} className={`border-l ${line}`} />)}
      </div>
    ))}
  </div>
);

const Led = ({ children, on }: { children: React.ReactNode; on?: boolean }) => (
  <button className={`flex h-[26px] w-[26px] items-center justify-center ${on ? "bg-[#2a5247] text-[#1fd19a]" : "text-[#a9a9a9]"}`}>{children}</button>
);

const Knob = ({ className = "h-[18px] w-[18px]" }: { className?: string }) => (
  <svg viewBox="0 0 20 20" className={className}><circle cx="10" cy="10" r="9.200" fill="#bfc8c4" stroke="#111" /><circle cx="10" cy="3.500" r="1.300" fill="#111" /></svg>
);

const RecDot = ({ className = "h-5 w-5" }: { className?: string }) => (
  <svg viewBox="0 0 20 20" className={className}><circle cx="10" cy="10" r="9.500" fill="#8f3b4a" stroke="#3a1a20" /><circle cx="10" cy="10" r="4" fill="none" stroke="#d9a0a8" strokeWidth="1.800" /></svg>
);

const Power = ({ className = "h-2.5 w-2.5" }: { className?: string }) => (
  <svg viewBox="0 0 12 12" className={className}><path d="M3.500 3a4 4 0 1 0 5 0M6 1v5" fill="none" stroke="currentColor" strokeWidth="1.600" /></svg>
);

const Env = ({ className = "h-3.5 w-3.5" }: { className?: string }) => (
  <svg viewBox="0 0 14 14" className={className}><path d="M1 11l5-6 3 3 4 3" fill="none" stroke="#3a3a3a" /><circle cx="2" cy="11" r="1.600" fill="#3a3a3a" /><circle cx="6.500" cy="4.500" r="2" fill="#3a3a3a" /><circle cx="12" cy="10" r="1.600" fill="#3a3a3a" /></svg>
);

const Route = () => (
  <svg viewBox="0 0 18 18" className="h-[17px] w-[17px] shrink-0"><path d="M0 0h18v18H0z" fill="#222" /><path d="M1 17L6 1h3L4 17z" fill="#3bb597" /><path d="M6 17l5-16h3L9 17z" fill="#e5c92e" /><path d="M11 17l5-16h2v10l-2 6z" fill="#3f5a72" /></svg>
);

const Fader = () => (
  <svg viewBox="0 0 20 40" className="h-[39px] w-5"><rect x="0.500" y="0.500" width="19" height="39" rx="4" fill="#111" /><rect x="1" y="2" width="18" height="5" rx="2" fill="#dfe5e2" /><rect x="1" y="7" width="18" height="12" fill="#5b6360" /><rect x="1" y="21" width="18" height="10" fill="#8c7a80" /><rect x="1" y="30" width="18" height="5" fill="#e5dade" /></svg>
);

const Box = ({ children, className = "" }: { children: React.ReactNode; className?: string }) => (
  <button className={`flex h-[17px] w-[17px] shrink-0 items-center justify-center text-[10px] leading-none font-bold ${className}`}>{children}</button>
);

const Round = ({ children, className = "" }: { children: React.ReactNode; className?: string }) => (
  <button className={`flex shrink-0 items-center justify-center rounded-full ${className}`}>{children}</button>
);

function TrackPanel() {
  return (
    <div className="flex h-[142px] pl-0.5">
      <div className="flex w-[18px] items-center justify-center bg-[#7f8985] text-[10px] text-white">1</div>
      <div className="min-w-0 flex-1 bg-[#262626]">
        <div className="flex h-[30px]">
          <div className="flex w-[583px] items-center bg-[#7f8985] pl-1.5">
            <div className="flex h-[22px] w-[146px] items-center rounded-full bg-[#222] text-[12px] text-[#ddd]">
              <RecDot className="h-[22px] w-[22px]" />
              <span className="ml-1.5 flex-1">Process</span>
              <Knob className="h-[21px] w-[21px]" />
            </div>
            <Box className="ml-1.5 bg-[#333] text-[#d35b5b]">M</Box>
            <Box className="ml-px bg-[#333] text-[#d8c84c]">S</Box>
            <Box className="ml-1.5 bg-[#13805c] text-[#7ff0c8]">FX</Box>
            <Box className="bg-[#2fbf8c] text-[#0c4a35]"><Power /></Box>
            <button className="ml-[5px] flex h-[18px] w-9 items-center justify-center bg-[#a5a9a7] text-[9px] text-[#333]"><Env className="h-3 w-3" />TRIM</button>
          </div>
          <div className="pt-[7px] pl-[5px]"><div className="h-[15px] w-[58px] overflow-hidden rounded-sm bg-[#8f8f8f] pl-1 text-[10px] leading-[14px] text-[#222]">sparta_6Do</div></div>
        </div>
        <div className="flex pt-1.5 pl-1.5">
          <svg viewBox="0 0 20 22" className="z-10 h-[22px] w-5"><circle cx="10" cy="11" r="9.500" fill="#1a1a1a" /><circle cx="9" cy="11" r="3.800" fill="#2fae86" /><path d="M1 12c0 3 1 4 3 5" stroke="#ddd" strokeWidth="2" fill="none" /></svg>
          <div className="-ml-2 w-[70px] text-[9px] leading-[10px] text-[#1c1c1c]">
            <div className="overflow-hidden bg-[#8f8f8f] pl-2 whitespace-nowrap">receiver_coo</div>
            <div className="bg-[#2b9477] pl-2">-1.766</div>
          </div>
        </div>
        <div className="flex flex-col gap-2 pt-[5px] pl-3">
          {[0, 1, 2].map((i) => <svg key={i} viewBox="0 0 8 14" className="h-3.5 w-2"><circle cx="4" cy="4" r="4" fill="#7d7d7d" /><circle cx="3" cy="11.500" r="1.500" fill="#555" /></svg>)}
        </div>
      </div>
    </div>
  );
}

function Arrange() {
  return (
    <div className="relative flex min-w-0 flex-1 flex-col overflow-hidden text-[13px] text-[#9a9a9a]">
      <div className="h-6 shrink-0" />
      <div className="flex h-[22px] shrink-0 items-center bg-[#3d3d3d] pl-2">
        <span className="flex h-[15px] w-[15px] items-center justify-center rounded-full border border-[#e05050] bg-[#b00000] text-[10px] text-[#ffb0a0]">3</span>
      </div>
      <div className="h-[38px] shrink-0" />
      <div className="flex h-[41px] shrink-0">
        {BARS.map(([a, b]) => (
          <div key={a} className="relative w-[226px] shrink-0 border-l border-[#777]">
            <div className="pl-1 leading-4"><span className="block w-[46px] border-b border-[#888] whitespace-nowrap">{a}</span></div>
            <div className="pl-1 text-[11px] leading-[15px]">{b}</div>
            <div className="absolute inset-x-0 bottom-0 h-[9px]"><div className="grid h-full grid-cols-16">{[...Array(16)].map((_, i) => <i key={i} className="border-l border-[#777]" />)}</div></div>
          </div>
        ))}
      </div>
      <div className="flex min-h-0 flex-1">
        <div className="relative min-w-0 flex-1 overflow-hidden bg-[#424242]">
          <div className="absolute inset-0 opacity-80"><GridLines line="border-[#2c2c2c]" /></div>
          <div className="absolute top-0 left-0 w-[1059px] overflow-hidden">
            <div className="flex h-[15px] items-center bg-[#424242]/80 pl-3 text-[11px] text-[#e0e0e0]">
              <Knob className="h-4 w-4 shrink-0" />
              <span className="w-[13px] bg-[#777] text-center leading-[14px] text-[#333]">M</span>
              <span className="ml-0.5 w-[14px] bg-[#777] text-center leading-[14px] text-[#333]">FX</span>
              <span className="ml-1 whitespace-nowrap">[-15.0dB] noise_1000sec.wav</span>
            </div>
            <div className="h-[3px] bg-white" />
            <div className="h-[49px] bg-[#c9c9c9]"><GridLines line="border-dashed border-[#555]" /></div>
            <div className="h-[22px] bg-[#505050]" />
            <div className="h-16 bg-[#c9c9c9]"><GridLines line="border-dashed border-[#555]" /></div>
          </div>
        </div>
        <div className="flex w-[19px] flex-col items-center bg-[#333] text-[#aaa]">
          <Round className="my-1 h-[13px] w-[13px] bg-[#111]"><ChevronUp className="h-2.5 w-2.5" /></Round>
          <div className="h-[611px] w-[13px] rounded-md bg-[#555] pt-[304px]"><div className="mx-0.5 h-0.5 bg-[#111]" /></div>
          <Round className="mt-1.5 h-[13px] w-[13px] bg-[#111]"><ChevronDown className="h-2.5 w-2.5" /></Round>
          <b className="mt-1 text-[20px] leading-5">+</b>
          <span className="mt-2.5 h-1 w-3 bg-[#999]" />
        </div>
      </div>
      <i className="absolute top-[42px] bottom-0 left-2.5 w-px bg-[#a01515]" />
      <svg viewBox="0 0 20 100" className="absolute top-[67px] left-[160px] h-[100px] w-5"><path d="M1 1h18l-9 9z" fill="#2c8070" stroke="#7fb5aa" /><path d="M10.500 10v90" stroke="#3c9b86" /></svg>
    </div>
  );
}

const SCALE = ["12", "6", "0-", "6-", "12-", "18-", "24-", "30-", "36-", "42-"];
const SCALE_R = ["12", "6", "-0", "-6", "-12", "-18", "-24", "-30", "-36", "-42"];
const SCALE_MID = ["-6-", "-12-", "-18-", "-24-", "-30-", "-36-", "-42-", "-48-", "-54-"];

function Mixer() {
  return (
    <div className="flex h-[333px] shrink-0 pl-[5px] text-[10px] leading-3 text-[#ddd]">
      <div className="flex w-[86px] flex-col">
        <div className="flex h-[42px] flex-col items-center gap-0.5 pt-1"><span>center</span><Knob className="h-[19px] w-[19px]" /></div>
        <div className="flex min-h-0 flex-1 bg-[#262626] font-['Liberation_Sans',Arial,sans-serif]">
          <div className="flex w-[66px] flex-col text-[9px] text-[#5c5c5c]">
            <span className="mt-[3px] pl-3 text-center text-[#8a8a8a]">0.00dB</span>
            <div className="mt-2 flex justify-between px-1 font-bold text-[#8a8a8a]"><span>-21.1</span><span>-25.9</span></div>
            <div className="mt-[7px] flex justify-between">
              <div className="flex flex-col gap-[9px]">{SCALE.map((s) => <span key={s}>{s}</span>)}</div>
              <div className="flex flex-col gap-[9px] pt-3.5 text-center">{SCALE_MID.map((s) => <span key={s}>{s}</span>)}</div>
              <div className="flex flex-col gap-[9px] text-right">{SCALE_R.map((s) => <span key={s}>{s}</span>)}</div>
            </div>
            <div className="mt-[18px] flex justify-between px-1 font-bold text-[#35a583]"><span>RMS</span><span>-30.0</span></div>
            <span className="mt-0.5 ml-5 font-['Open_Sans',sans-serif] text-[10px] text-[#ddd]">MASTER</span>
          </div>
          <div className="mt-[26px] flex h-[239px] w-5 justify-center bg-[linear-gradient(#000,#000)] bg-[length:2px_100%] bg-center bg-no-repeat pt-[54px]"><Fader /></div>
        </div>
      </div>
      <div className="flex w-[30px] flex-col items-center pt-1.5 text-[9px] leading-[14px]">
        <Box className="bg-[#858585] text-[#444]"><svg viewBox="0 0 14 10" className="h-2.5 w-3.5"><circle cx="5" cy="5" r="4" fill="none" stroke="#444" /><circle cx="9" cy="5" r="4" fill="none" stroke="#444" /></svg></Box>
        <span className="mb-0.5">MONO</span>
        <Box className="bg-[#222] text-[#d35b5b]">M</Box>
        <Box className="mt-px mb-1.5 bg-[#222] text-[#d8c84c]">S</Box>
        <Route />
        <span className="mb-[5px]">ROUTE</span>
        <Box className="bg-[#5a5a5a]">FX</Box>
        <Box className="mb-1 bg-[#858585] text-[#333]"><Power /></Box>
        <Box className="bg-[#858585]"><Env /></Box>
        <span className="mb-1">TRIM</span>
        <Box className="bg-[#222]">i</Box>
      </div>
      <div className="flex w-[142px] flex-col">
        <div className="flex h-[73px] flex-col bg-[#7f8985] px-[5px] pt-1.5 text-[9px]">
          <div className="flex h-[18px] items-center justify-between rounded-sm rounded-r-full bg-[#5d6562] pr-0.5 pl-1"><span>Input 1</span><Round className="h-[15px] w-[15px] bg-[#8d9693]"><ChevronDown className="h-2.5 w-2.5" strokeWidth={4} /></Round></div>
          <div className="mt-1 flex justify-between">
            <div className="flex h-[18px] w-9 items-center justify-between rounded-sm rounded-r-full bg-[#5d6562] pr-0.5 pl-1.5"><span>in</span><Round className="h-[15px] w-[15px] bg-[#8d9693]"><ChevronDown className="h-2.5 w-2.5" strokeWidth={4} /></Round></div>
            <button className="h-[18px] w-[18px] border border-[#333] text-[8px] leading-[8px] font-bold text-[#222]">IN FX</button>
          </div>
          <Knob className="mx-auto mt-1 h-[19px] w-[19px]" />
        </div>
        <div className="flex flex-1 flex-col bg-[#262626]">
          <div className="flex flex-1">
            <div className="flex w-[90px] flex-col justify-between pt-2 pb-[5px] text-center font-['Liberation_Sans',Arial,sans-serif] text-[9px] text-[#777]">
              <span>-21.1</span>
              <svg viewBox="0 0 10 14" className="mx-auto h-3.5 w-2.5"><path d="M0 4h4l6-4v14l-6-4H0z" fill="#777" /></svg>
            </div>
            <div className="flex w-5 flex-col items-center pt-[13px]">
              <div className="flex h-[171px] w-full justify-center bg-[linear-gradient(#000,#000)] bg-[length:2px_100%] bg-center bg-no-repeat pt-[35px]"><Fader /></div>
              <RecDot className="mt-2.5 h-5 w-5 shrink-0" />
            </div>
            <div className="flex flex-1 flex-col items-center pt-1.5 pr-1">
              <Box className="bg-[#222] text-[#d35b5b]">M</Box>
              <Box className="mt-px mb-1.5 bg-[#222] text-[#d8c84c]">S</Box>
              <Route />
              <Box className="mt-2 bg-[#13805c] text-[#7ff0c8]">FX</Box>
              <Box className="mb-1.5 bg-[#2fbf8c] text-[#0c4a35]"><Power /></Box>
              <Box className="bg-[#8d9190]"><Env /></Box>
              <Round className="mt-[9px] h-[13px] w-[13px] bg-[#777]"><span className="h-1.5 w-1.5 border border-[#222]" /></Round>
            </div>
          </div>
          <div className="h-5 text-center text-[12px] leading-5">Process</div>
        </div>
        <div className="h-[18px] bg-[#7f8985] text-center leading-[18px]">1</div>
      </div>
    </div>
  );
}

function Reaper() {
  return (
    <section className="relative flex h-full min-w-0 flex-col overflow-hidden bg-[#333] text-[13px] leading-5">
      <header className="flex h-[27px] shrink-0 items-center bg-white pl-0.5 text-[#999]">
        <ReaperLogo small />
        <h1 className="ml-1.5 flex-1">10_OLD_ch36_500ms [modified] - REAPER v7.09 - EVALUATION LICENSE</h1>
        <button aria-label="Minimize" className="flex w-[54px] justify-center"><Minus className="h-3.5 w-3.5" /></button>
        <button aria-label="Restore" className="flex w-[53px] justify-center"><Copy className="h-3.5 w-3.5 -scale-x-100" strokeWidth={1.500} /></button>
        <button aria-label="Close" className="mr-1 flex w-[53px] justify-center"><X className="h-[18px] w-[18px]" strokeWidth={1.300} /></button>
      </header>
      <nav className="flex h-[22px] shrink-0 items-center gap-3.5 bg-white pr-[7px] pl-[7px] text-[#555]">
        {["File", "Edit", "View", "Insert", "Item", "Track", "Options", "Actions", "Help"].map((m) => <button key={m}>{m}</button>)}
        <span className="ml-3 flex-1">[FX program envelope change: Tra...]</span>
        <span>[audio device closed]</span>
      </nav>
      <div className="flex min-h-0 flex-1">
        <div className="flex w-[698px] shrink-0 flex-col">
          <div className="flex h-[125px] shrink-0 items-start gap-px pt-12 pl-[3px]">
            <Led><File className="h-4 w-4" strokeWidth={1.600} /></Led>
            <Led><svg viewBox="0 0 20 20" className="h-5 w-5" fill="none" stroke="currentColor" strokeWidth="1.400"><path d="M1 13h18v5H1zM10 11V1M7 4l3-3 3 3M3 15.500h2" /></svg></Led>
            <Led><svg viewBox="0 0 20 20" className="h-5 w-5" fill="none" stroke="currentColor" strokeWidth="1.400"><path d="M1 13h18v5H1z" fill="currentColor" /><path d="M10 0v9M7 6l3 3 3-3" /></svg></Led>
            <Led><Info className="h-[18px] w-[18px]" strokeWidth={1.500} /></Led>
            <Led><svg viewBox="0 0 20 20" className="h-5 w-5" fill="currentColor"><path d="M0 4v10h10L6.500 10.500c4-3 9-2 13 3C18 6 10 3 4 7.500z" /></svg></Led>
            <Led><svg viewBox="0 0 20 20" className="h-5 w-5 -scale-x-100" fill="currentColor"><path d="M0 4v10h10L6.500 10.500c4-3 9-2 13 3C18 6 10 3 4 7.500z" /></svg></Led>
            <Led><svg viewBox="0 0 20 20" className="h-5 w-5"><path d="M6 18h8L11.500 5h-3z" fill="none" stroke="currentColor" strokeWidth="1.800" /><path d="M1 9c2-5 5-6 9-6s7 1 9 6" fill="none" stroke="currentColor" strokeWidth="1.500" /><path d="M9 1h2v11H9z" fill="currentColor" /></svg></Led>
            <span className="w-3" />
            <Led><span className="h-4 w-5 border border-dotted border-[#aaa] bg-[#555]" /></Led>
            <span className="w-3.5" />
            <Led on><svg viewBox="0 0 20 20" className="h-[18px] w-[18px]"><path d="M1 2h18M3 18C8 15 10 6 11 2M17 18C12 15 9 6 8 2" fill="none" stroke="currentColor" strokeWidth="1.400" /></svg></Led>
            <Led on><svg viewBox="0 0 22 20" className="h-5 w-[22px]" fill="none" stroke="currentColor" strokeWidth="1.600"><path d="M9 6H5a4 4 0 0 0 0 8h4M13 6h4a4 4 0 0 1 0 8h-4M6 10h10" /></svg></Led>
            <Led><svg viewBox="0 0 20 20" className="h-5 w-5" fill="none" stroke="currentColor" strokeWidth="1.200"><path d="M1 2h4v4H1zM8 2h4v4H8zM15 2h4v4h-4zM1 8h4v4H1zM15 8h4v4h-4zM1 14h4v4H1zM8 14h4v4H8zM15 14h4v4h-4z" /><path d="M8 8h4v4H8z" fill="currentColor" /></svg></Led>
            <Led on><svg viewBox="0 0 20 20" className="h-5 w-5" fill="none" stroke="currentColor" strokeWidth="1.500"><path d="M5 8l5-6 5 6" strokeDasharray="3 1" /><path d="M9 12H5a3 3 0 0 0 0 6h4M11 12h4a3 3 0 0 1 0 6h-4M7 15h6" /></svg></Led>
            <Led on><svg viewBox="0 0 20 20" className="h-5 w-5" stroke="currentColor" strokeWidth="1.400" strokeDasharray="4 1.500"><path d="M2 1v18M7 1v18M12 1v18M17 1v18" /></svg></Led>
            <Led on><svg viewBox="0 0 20 20" className="h-5 w-5" fill="none" stroke="currentColor" strokeWidth="3"><path d="M6 4h5a6 6 0 0 1 0 12H6" /><path d="M2 4h2M2 16h2" /></svg></Led>
            <Led on><svg viewBox="0 0 20 20" className="h-5 w-5"><path d="M3 9h14v10H3z" fill="currentColor" /><path d="M6 9V5a4 4 0 0 1 8 0v4" fill="none" stroke="currentColor" strokeWidth="1.800" /></svg></Led>
            <span className="w-4" />
            <Led><svg viewBox="0 0 20 20" className="h-5 w-5" fill="currentColor"><path d="M0 1h4l15 18V16L9 4V1h3l8 9v9L4 4z" /></svg></Led>
          </div>
          <TrackPanel />
        </div>
        <Arrange />
      </div>
      <div className="flex h-[58px] shrink-0 pl-2">
        <div className="flex items-center pt-[18px] text-[#999]">
          <Round className="h-[22px] w-[22px] border border-[#111] bg-[#2a2a2a]"><svg viewBox="0 0 10 10" className="h-2.5 w-2.5"><path d="M1 1h2v8H1zM9 1v8L3 5z" fill="#999" /></svg></Round>
          <Round className="ml-0.5 h-[22px] w-[22px] border border-[#111] bg-[#2a2a2a]"><svg viewBox="0 0 10 10" className="h-2.5 w-2.5"><path d="M7 1h2v8H7zM1 1v8l6-4z" fill="#999" /></svg></Round>
          <RecDot className="ml-[5px] h-[27px] w-[27px]" />
          <Round className="ml-px h-[26px] w-[26px] border border-[#111] bg-linear-to-br from-[#d8e0dc] to-[#a08a90]"><svg viewBox="0 0 10 10" className="h-3 w-3"><path d="M1 1v8l8-4z" fill="#333" /></svg></Round>
          <Round className="h-[22px] w-[22px] bg-[#14a673] text-white"><RotateCw className="h-3.5 w-3.5" strokeWidth={3} /></Round>
          <Round className="ml-[7px] h-[22px] w-[22px] border border-[#111] bg-[#2a2a2a]"><span className="h-2 w-2 bg-[#999]" /></Round>
          <Round className="ml-0.5 h-[22px] w-[22px] gap-0.5 border border-[#111] bg-[#2a2a2a]"><i className="h-2 w-[3px] bg-[#999]" /><i className="h-2 w-[3px] bg-[#999]" /></Round>
          <span className="ml-3 text-[20px] font-bold whitespace-nowrap text-[#b5b5b5]">25.1.00 /</span>
        </div>
        <span className="flex-1" />
        <div className="flex flex-col items-end text-[11px] leading-4 text-[#999]">
          <div className="flex h-5 items-center gap-2.5 pr-[22px]">
            <Round className="h-[13px] w-[13px] bg-[#111]"><svg viewBox="0 0 6 6" className="h-1.5 w-1.5"><path d="M1 0v6l5-3z" fill="#aaa" /></svg></Round>
            <b className="text-[20px] leading-4">+</b>
            <span className="h-1 w-3 bg-[#999]" />
          </div>
          <div className="flex items-center pr-[19px]">
            <div className="flex h-[30px] w-4 flex-col items-center bg-[#222] text-[9px] leading-3"><span>AL</span><Round className="h-3 w-3 bg-[#888] text-[#222]"><ChevronDown className="h-2.5 w-2.5" strokeWidth={4} /></Round></div>
            <svg viewBox="0 0 34 34" className="ml-1.5 h-[34px] w-[34px]"><circle cx="17" cy="17" r="15" fill="#222" /><path d="M17 2v12" stroke="#ccc" /></svg>
            <div className="ml-3.5 text-center"><div>Rate:</div><div>1.0</div></div>
          </div>
        </div>
      </div>
      <Mixer />
      <div className="flex h-[17px] shrink-0 items-center bg-[#3a3a3a] pl-1 font-['Liberation_Sans',Arial,sans-serif] text-[12px] leading-4 text-[#8a8a8a]">
        <span className="w-[5px] text-white">!</span>
        <span className="flex h-full w-[68px] items-center gap-[3px] bg-[#7f8985] pl-3 font-bold text-[#1c1c1c] [clip-path:polygon(0_0,100%_0,92%_100%,8%_100%)]"><i className="flex h-2.5 w-2.5 items-center justify-center border border-current"><X className="h-2 w-2" /></i>Mixer</span>
        <span className="ml-1.5 flex items-center gap-[3px]"><i className="flex h-2.5 w-2.5 items-center justify-center border border-current"><X className="h-2 w-2" /></i>Performance</span>
        <span className="ml-[18px] flex items-center gap-[3px]"><i className="flex h-2.5 w-2.5 items-center justify-center border border-current"><X className="h-2 w-2" /></i>Routing Matrix</span>
      </div>
      <PluginWindow />
      <RenderDialog />
      <FinishedDialog />
      <div className="flex h-[35px] shrink-0 items-center bg-[#101010] text-white">
        <TaskApps />
        <span className="flex-1" />
        <ChevronUp className="h-[18px] w-[18px]" />
        <span className="ml-3 flex h-[18px] w-3.5 items-center justify-center rounded-lg bg-[#0078f0]"><Bluetooth className="h-3.5 w-3.5" /></span>
        <svg viewBox="0 0 20 14" className="ml-2.5 h-[13px] w-[19px]"><path d="M5 3h13v9H5zM18 5h2v5h-2z" fill="#fff" /><path d="M1 0v3h4V0M3 3v5" stroke="#fff" fill="none" /></svg>
        <Volume2 className="ml-2 h-[18px] w-[18px]" strokeWidth={1.500} />
        <Globe className="ml-2.5 h-[19px] w-[19px]" strokeWidth={1.500} />
        <svg viewBox="0 0 20 20" className="ml-2 h-[19px] w-[19px]"><path d="M1 3l17-2v16H1z" fill="none" stroke="#fff" strokeWidth="1.500" /><path d="M6 8c2-3 6-2 7 0M13 11c-2 3-6 2-7 0" stroke="#fff" fill="none" strokeWidth="1.300" /><circle cx="15.500" cy="15.500" r="4" fill="#ff9a1a" /></svg>
        <span className="ml-3 w-10">ENG</span>
        <span className="w-[42px]">16:46</span>
        <svg viewBox="0 0 20 20" className="mr-7 ml-2 h-[19px] w-[19px]"><path d="M1 1h18v14h-7l-4 4v-4H1z" fill="#fff" /><path d="M4 5h12M4 8h12M4 11h7" stroke="#111" /><path d="M17 10a5 5 0 1 1-5 7c3 0 5-3 5-7z" fill="#fff" stroke="#111" /></svg>
      </div>
    </section>
  );
}

export default function App() {
  return (
    <main className="grid h-screen w-full grid-cols-[3fr_4fr] overflow-hidden bg-black font-['Open_Sans','Noto_Sans',sans-serif]">
      <Explorer />
      <Reaper />
    </main>
  );
}
